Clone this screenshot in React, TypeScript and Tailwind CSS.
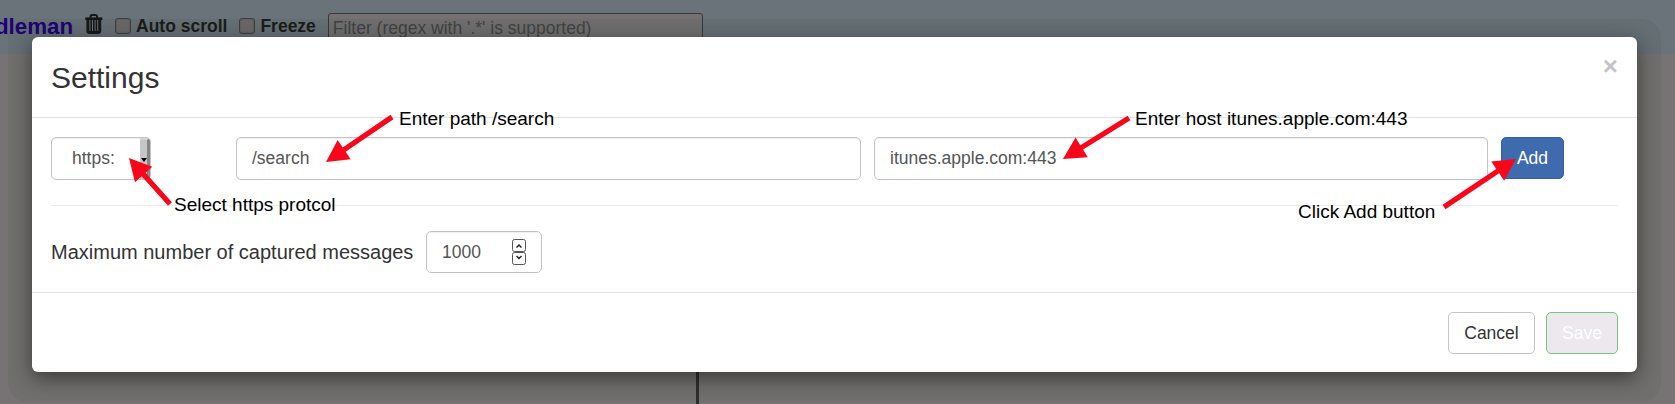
import React from "react";

const field =
  "border border-[#c3c3c3] rounded-[5px] bg-white text-[#555] shadow-[inset_0_1px_1px_rgba(0,0,0,0.06)]";

function TrashIcon() {
  return (
    <svg className="shrink-0" width="18" height="20" viewBox="0 0 18 20" fill="none" stroke="#161617">
      <path d="M0.3 4.7H17.3" strokeWidth="2.6" />
      <path d="M5.6 4V2.6Q5.6 1.1 7 1.1H10.6Q12 1.1 12 2.6V4" strokeWidth="2" />
      <path d="M2.9 5V17Q2.9 18.5 4.6 18.5H13Q14.7 18.5 14.7 17V5" strokeWidth="3" />
      <path d="M6.2 6V17.5M8.8 6V17.5M11.4 6V17.5" strokeWidth="1.6" />
    </svg>
  );
}

function Check({ label, className }: { label: string; className: string }) {
  return (
    <label className={`flex h-[20px] items-center whitespace-nowrap ${className}`}>
      <span className="mr-[5px] h-4 w-4 shrink-0 rounded-[3px] border border-[#3f3d3f] bg-[#706a6d] shadow-[inset_0_0_2px_rgba(0,0,0,0.25)]" />
      {label}
    </label>
  );
}

function Arrow({ tip, tail }: { tip: [number, number]; tail: [number, number] }) {
  const dx = tip[0] - tail[0];
  const dy = tip[1] - tail[1];
  const len = Math.hypot(dx, dy);
  const angle = (Math.atan2(dy, dx) * 180) / Math.PI;
  return (
    <g transform={`translate(${tail[0]} ${tail[1]}) rotate(${angle})`}>
      <path d={`M0 -2.6H${len - 22}V-11.6L${len} 0L${len - 22} 11.6V2.6H0Z`} fill="#f9061b" />
    </g>
  );
}

function Note({ text, className }: { text: string; className: string }) {
  return (
    <span className={`absolute whitespace-nowrap text-[19px] leading-[22px] text-black ${className}`}>
      {text}
    </span>
  );
}

export default function App() {
  return (
    <div className="relative h-[404px] w-[1675px] overflow-hidden bg-[#777375] font-['Liberation_Sans',Arial,sans-serif] text-[17.5px] leading-[25px] text-[#333]">
      <header className="flex h-[54px] items-start overflow-hidden bg-[#6a727a] pt-[14px] font-bold text-[#1a1a1c]">
        <span className="-ml-[5px] w-[77px] text-[22.3px] leading-[25px] text-[#1c0078]">dleman</span>
        <span className="ml-[13px]">
          <TrashIcon />
        </span>
        <Check label="Auto scroll" className="ml-[12px] mt-[2px]" />
        <Check label="Freeze" className="ml-[12px] mt-[2px]" />
        <span className="-mt-[1px] ml-[12px] h-[30px] w-[375px] rounded-[3px] border border-[#37393c] bg-[#757173] pl-1 text-[17.5px] leading-[28px] font-normal text-[#434343]">
          Filter (regex with '.*' is supported)
        </span>
      </header>
      <div className="ml-[696px] h-[350px] w-[3px] bg-[#2e2e2e]" />

      <section className="absolute left-[32px] top-[37px] flex h-[335px] w-[1605px] flex-col rounded-[6px] bg-white shadow-[0_6px_20px_rgba(0,0,0,0.48),0_6px_1px_24px_rgba(40,65,35,0.08)]">
        <div className="flex h-[81px] shrink-0 justify-between border-b border-[#e2e2e2] pl-[19px] pr-[19px]">
          <h4 className="mt-[22px] text-[30px] leading-[38px]">Settings</h4>
          <button className="mt-[16px] h-[26px] text-[26px] font-bold leading-[26px] text-[#c6c4c6]">×</button>
        </div>

        <div className="h-[174px] shrink-0 px-[19px] pt-[19px]">
          <div className="flex">
            <div className={`flex h-[43px] w-[100px] overflow-hidden ${field}`}>
              <span className="w-[88px] pl-[20px] leading-[41px]">https:</span>
              <span className="flex w-[10px] items-center justify-center border-r-[3px] border-t-2 border-r-[#858585] border-t-[#d4d4d4] bg-[#c6c6c6]">
                <svg width="6" height="4" viewBox="0 0 6 4" className="shrink-0">
                  <path d="M0 0H6L3 4Z" fill="#000" />
                </svg>
              </span>
            </div>
            <div className={`ml-[85px] h-[43px] w-[625px] pl-[15px] leading-[41px] ${field}`}>/search</div>
            <div className={`ml-[13px] h-[43px] w-[614px] pl-[15px] leading-[41px] ${field}`}>
              itunes.apple.com:443
            </div>
            <button className="ml-[13px] h-[42px] w-[63px] rounded-[5px] border border-[#375f9d] bg-[#3e6bad] text-white">
              Add
            </button>
          </div>
          <hr className="mt-[25px] border-[#ececec]" />
          <div className="mt-[25px] flex">
            <label className="w-[375px] whitespace-nowrap text-[20px] leading-[42px]">
              Maximum number of captured messages
            </label>
            <div className={`flex h-[42px] w-[116px] items-center justify-between pl-[15px] pr-[15px] ${field}`}>
              1000
              <svg width="14" height="26" viewBox="0 0 14 26" fill="none" stroke="#555">
                <rect x="0.5" y="0.5" width="13" height="12" rx="2" />
                <rect x="0.5" y="13.5" width="13" height="12" rx="2" />
                <path d="M4.5 8.5L7 6L9.5 8.5M4.5 17L7 19.5L9.5 17" stroke="#222" strokeWidth="1.5" />
              </svg>
            </div>
          </div>
        </div>

        <div className="flex grow justify-end border-t border-[#e2e2e2] pr-[19px] pt-[19px]">
          <button className="h-[42px] w-[87px] rounded-[5px] border border-[#c6c6c6]">Cancel</button>
          <button className="ml-[11px] h-[42px] w-[72px] rounded-[5px] border border-[#7cc47a] bg-[#ece8ee] text-white">
            Save
          </button>
        </div>
      </section>

      <svg className="absolute left-0 top-0" width="1675" height="404">
        <Arrow tip={[129, 158]} tail={[170, 204]} />
        <Arrow tip={[326, 162]} tail={[392, 117]} />
        <Arrow tip={[1063, 159]} tail={[1129, 118]} />
        <Arrow tip={[1516, 159]} tail={[1444, 207]} />
      </svg>
      <Note text="Enter path /search" className="left-[399px] top-[108px]" />
      <Note text="Enter host itunes.apple.com:443" className="left-[1135px] top-[108px]" />
      <Note text="Select https protcol" className="left-[174px] top-[194px]" />
      <Note text="Click Add button" className="left-[1298px] top-[201px]" />
    </div>
  );
}
